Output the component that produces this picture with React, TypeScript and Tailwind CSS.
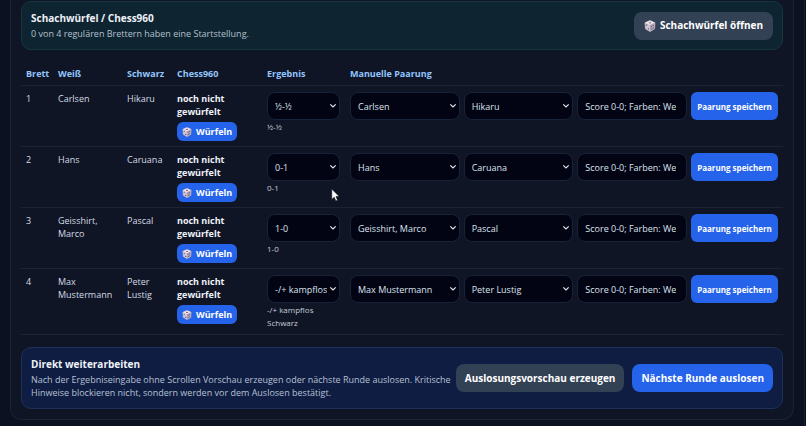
import { useState } from "react";

type Board = {
  nr: number;
  white: string;
  black: string;
  result: string;
};

const BOARDS: Board[] = [
  { nr: 1, white: "Carlsen", black: "Hikaru", result: "½-½" },
  { nr: 2, white: "Hans", black: "Caruana", result: "0-1" },
  { nr: 3, white: "Geisshirt, Marco", black: "Pascal", result: "1-0" },
  { nr: 4, white: "Max Mustermann", black: "Peter Lustig", result: "-/+ kampflos Schwarz" },
];

const PLAYERS = BOARDS.flatMap((b) => [b.white, b.black]);
const RESULTS = ["1-0", "½-½", "0-1", "+/- kampflos Weiß", "-/+ kampflos Schwarz"];

export default function App() {
  return (
    <div className="relative min-h-screen overflow-hidden bg-[#080d1a] pr-px font-['Open_Sans','Noto_Sans',sans-serif] text-[9px] leading-[13px] text-[#d5dbe6]">
      <div className="min-h-screen border-r border-[#162033] bg-[#0b1121] px-[10px]">
        <main className="rounded-b-xl border border-t-0 border-[#1a2436] bg-[#0f1525] px-[10px] pt-px pb-[10px]">
          <section className="flex items-center justify-between gap-4 rounded-[10px] border border-[#17363f] bg-[#0e2431] px-[9px] py-2">
            <div>
              <h2 className="mb-px text-[10px] leading-4 font-bold text-[#eef2f8]">Schachwürfel / Chess960</h2>
              <p className="leading-[14px] text-[#b4c0cd]">0 von 4 regulären Brettern haben eine Startstellung.</p>
            </div>
            <button className="flex h-7 shrink-0 items-center gap-1 rounded-lg bg-[#334155] px-[10px] text-[10px] font-bold text-white">
              <Dice className="size-3" />
              Schachwürfel öffnen
            </button>
          </section>

          <table className="mt-3 w-full table-fixed border-collapse text-left">
            <thead>
              <tr className="border-b border-[#1b2436] text-[#93c5fd]">
                <th className="w-8 px-[5px] py-[5px] font-bold">Brett</th>
                <th className="w-[69px] px-[5px] font-bold">Weiß</th>
                <th className="w-[50px] px-[5px] font-bold">Schwarz</th>
                <th className="w-[90px] px-[5px] font-bold">Chess960</th>
                <th className="w-[83px] px-[5px] font-bold">Ergebnis</th>
                <th className="px-[5px] font-bold">Manuelle Paarung</th>
              </tr>
            </thead>
            <tbody>
              {BOARDS.map((b) => (
                <BoardRow key={b.nr} board={b} />
              ))}
            </tbody>
          </table>

          <section className="mt-3 flex items-center justify-between gap-1 rounded-[10px] border border-[#1e3158] bg-[#101d42] px-[9px] py-[9px]">
            <div>
              <h2 className="mb-[2px] text-[10px] leading-[14px] font-bold text-[#eef2f8]">Direkt weiterarbeiten</h2>
              <p className="text-[#b6c0d4]">
                Nach der Ergebniseingabe ohne Scrollen Vorschau erzeugen oder nächste Runde auslosen. Kritische Hinweise blockieren nicht, sondern werden vor dem Auslosen bestätigt.
              </p>
            </div>
            <div className="flex shrink-0 gap-2">
              <button className="h-7 rounded-lg bg-[#334155] px-[9px] text-[10px] font-bold text-white">Auslosungsvorschau erzeugen</button>
              <button className="h-7 rounded-lg bg-[#2563eb] px-[9px] text-[10px] font-bold text-white">Nächste Runde auslosen</button>
            </div>
          </section>
        </main>
      </div>

      <svg viewBox="0 0 12 18" className="absolute top-[188px] left-[331px] h-[14px] w-[9px]" aria-hidden="true">
        <path d="M1 1v14l3.3-3.1 2.1 5 2.4-1-2.1-4.8H11z" fill="#fff" stroke="#111" strokeWidth="0.8" />
      </svg>
    </div>
  );
}

function BoardRow({ board }: { board: Board }) {
  const [result, setResult] = useState(board.result);
  const [white, setWhite] = useState(board.white);
  const [black, setBlack] = useState(board.black);
  const [note, setNote] = useState("Score 0-0; Farben: Weiß/Schwarz");

  return (
    <tr className="border-b border-[#1b2436] align-top">
      <td className="px-[5px] pt-[6px] pb-[5px]">{board.nr}</td>
      <td className="px-[5px] pt-[6px] pb-[5px]">{board.white}</td>
      <td className="px-[5px] pt-[6px] pb-[5px]">{board.black}</td>
      <td className="px-[5px] pt-[6px] pb-[5px]">
        <strong className="block w-16 font-bold text-[#eef2f8]">noch nicht gewürfelt</strong>
        <button className="mt-1 flex h-[19px] items-center gap-1 rounded-md bg-[#2563eb] px-[5px] font-bold text-white">
          <Dice className="size-[10px]" />
          Würfeln
        </button>
      </td>
      <td className="px-[5px] pt-[6px] pb-[5px]">
        <Select label={`Ergebnis Brett ${board.nr}`} value={result} options={RESULTS} onChange={setResult} />
        <div className="w-14 text-[8px] leading-[13px] text-[#c3cbd8]">{result}</div>
      </td>
      <td className="px-[5px] pt-[6px] pb-[5px]">
        <div className="flex gap-1">
          <div className="grid min-w-0 flex-1 grid-cols-3 gap-1">
            <Select label={`Weiß Brett ${board.nr}`} value={white} options={PLAYERS} onChange={setWhite} />
            <Select label={`Schwarz Brett ${board.nr}`} value={black} options={PLAYERS} onChange={setBlack} />
            <input
              aria-label={`Begründung Brett ${board.nr}`}
              value={note}
              onChange={(e) => setNote(e.target.value)}
              className="h-7 w-full min-w-0 rounded-lg border border-[#182238] bg-[#020414] pr-[10px] pl-[7px] text-[#dde3ed]"
            />
          </div>
          <button className="h-7 w-[87px] shrink-0 rounded-md bg-[#2563eb] text-[8px] font-bold whitespace-nowrap text-white">Paarung speichern</button>
        </div>
      </td>
    </tr>
  );
}

function Select({
  label,
  value,
  options,
  onChange,
}: {
  label: string;
  value: string;
  options: string[];
  onChange: (v: string) => void;
}) {
  return (
    <div className="relative min-w-0">
      <select
        aria-label={label}
        value={value}
        onChange={(e) => onChange(e.target.value)}
        className="block h-7 w-full appearance-none rounded-lg border border-[#182238] bg-[#020414] pr-3 pl-[7px] text-[#dde3ed]"
      >
        {options.map((o) => (
          <option key={o}>{o}</option>
        ))}
      </select>
      <svg viewBox="0 0 8 6" className="pointer-events-none absolute top-[11px] right-[3px] h-[6px] w-2" fill="none" stroke="#e5e7eb" strokeWidth="1.2" aria-hidden="true">
        <path d="M1.3 1.3 4 4l2.7-2.7" />
      </svg>
    </div>
  );
}

function Dice({ className }: { className: string }) {
  return (
    <svg viewBox="0 0 16 16" className={className} aria-hidden="true">
      <path d="M8 .8 14.6 3.6 14 11.8 8 15.3 2 11.8 1.4 3.6z" fill="#cfc3d2" stroke="#cfc3d2" strokeLinejoin="round" />
      <path d="M8 1 14.4 3.7 8 6.8 1.6 3.7z" fill="#eee6ef" />
      <path d="M8 6.8 14.4 3.7 13.8 11.6 8 15z" fill="#b3a4b8" />
      <ellipse cx="8" cy="3.8" rx="1.7" ry="0.9" fill="#8d6278" />
      <g fill="#5d4c68">
        <circle cx="3.6" cy="6.7" r="0.9" />
        <circle cx="6" cy="11.8" r="0.9" />
        <circle cx="10" cy="8.3" r="0.8" />
        <circle cx="12.5" cy="7" r="0.8" />
        <circle cx="10" cy="12" r="0.8" />
        <circle cx="12.3" cy="10.6" r="0.8" />
      </g>
    </svg>
  );
}
